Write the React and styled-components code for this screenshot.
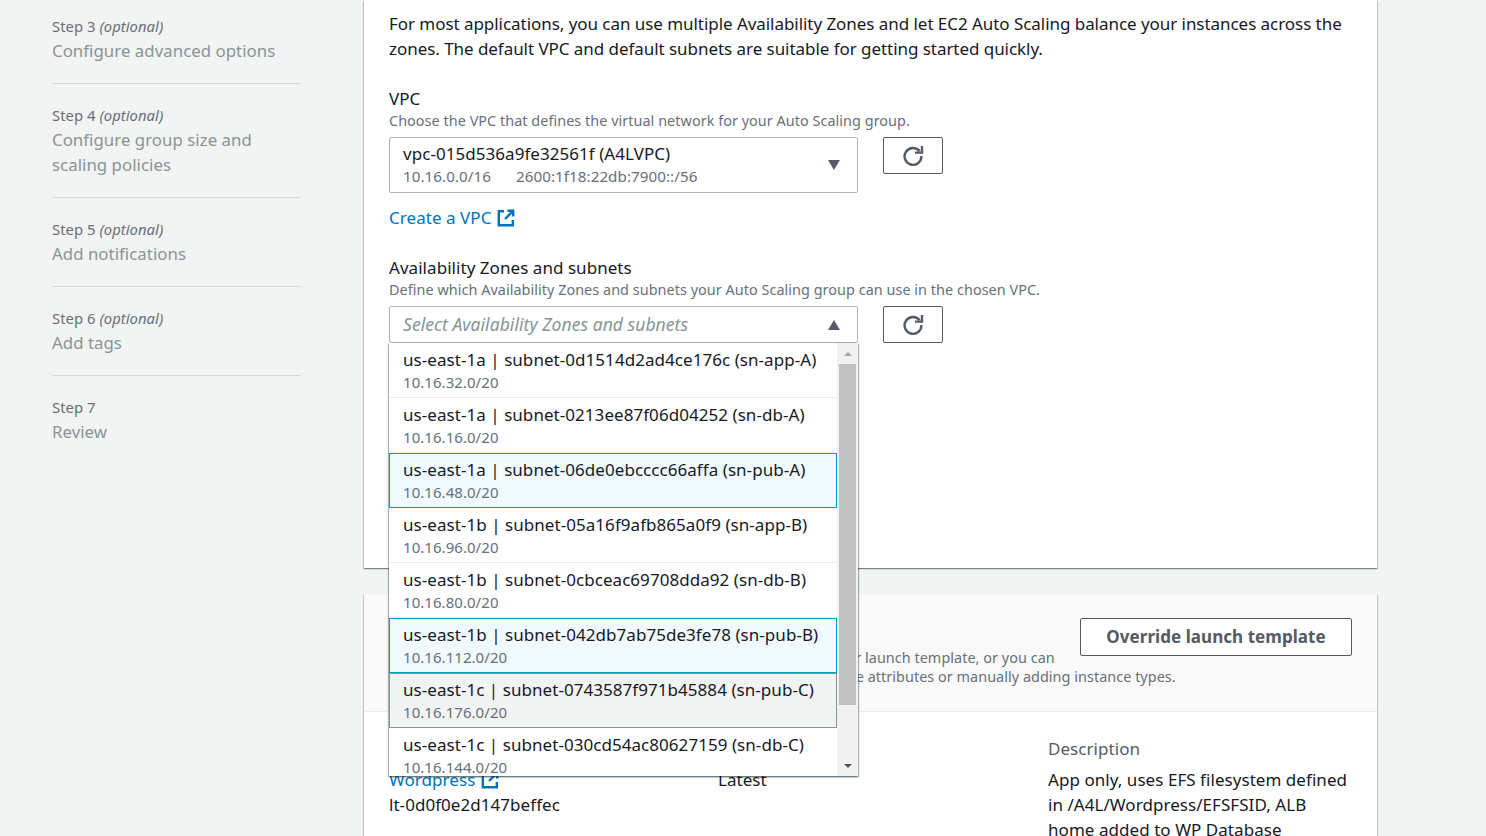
import React from "react";
import styled, { createGlobalStyle } from "styled-components";

const GlobalStyle = createGlobalStyle`
  html, body {
    margin: 0;
    padding: 0;
    background: #f2f3f3;
  }
  body {
    font-family: "Noto Sans", "Open Sans", sans-serif;
    font-size: 17px;
    line-height: 25px;
    color: #16191f;
    letter-spacing: 0.05px;
  }
  * {
    box-sizing: border-box;
  }
`;

const Page = styled.div`
  display: flex;
  height: 836px;
  overflow: hidden;
`;

const Sidebar = styled.nav`
  width: 364px;
  flex: none;
  padding: 15px 63px 0 52px;
`;

const StepItem = styled.div`
  padding: 0 0 20px;
  margin-bottom: 20px;
  border-bottom: ${(p) => (p.$last ? "none" : "1px solid #d5dbdb")};
`;

const StepLabel = styled.div`
  font-size: 14.8px;
  line-height: 22px;
  color: #687078;
  margin-bottom: 1px;

  em {
    font-style: italic;
  }
`;

const StepTitle = styled.div`
  color: #879596;
  font-size: 16.8px;
  line-height: 25px;
  width: 228px;
`;

const Main = styled.main`
  width: 1013px;
  flex: none;
`;

const Card = styled.section`
  background: #fff;
  box-shadow: 0 1px 1px 0 rgba(0, 28, 36, 0.3), 1px 1px 1px 0 rgba(0, 28, 36, 0.15),
    -1px 1px 1px 0 rgba(0, 28, 36, 0.15);
`;

const NetworkCard = styled(Card)`
  height: 568px;
  padding: 11px 25px 0;
  margin-bottom: 26px;
`;

const Intro = styled.p`
  margin: 0 0 26px;
  letter-spacing: -0.05px;
`;

const Field = styled.div`
  margin-top: ${(p) => p.$top || 0}px;
`;

const FieldLabel = styled.div`
  line-height: 24px;
`;

const FieldHint = styled.div`
  font-size: 14.4px;
  line-height: 19px;
  color: #687078;
  margin-bottom: 7px;
`;

const FieldRow = styled.div`
  display: flex;
  align-items: flex-start;
  gap: 25px;
`;

const SelectWrap = styled.div`
  position: relative;
  width: 469px;
`;

const SelectBox = styled.div`
  display: flex;
  align-items: center;
  justify-content: space-between;
  height: ${(p) => p.$height}px;
  padding: 0 17px 0 13px;
  background: #fff;
  border: 1px solid #aab7b8;
  border-radius: 2px;
`;

const SelectValue = styled.div`
  padding-bottom: 4px;
`;

const SelectMeta = styled.div`
  font-size: 15.2px;
  line-height: 20px;
  color: #687078;
  display: flex;
  gap: 25px;
`;

const Placeholder = styled.span`
  font-size: 17.5px;
  font-style: italic;
  color: #879596;
`;

const Caret = styled.span`
  width: 0;
  height: 0;
  border-left: 6.5px solid transparent;
  border-right: 6.5px solid transparent;
  border-${(p) => (p.$up ? "bottom" : "top")}: 10px solid #545b64;
`;

const RefreshButton = styled.button`
  width: 60px;
  height: 37px;
  padding: 0 0 2px;
  display: flex;
  align-items: center;
  justify-content: center;
  background: #fff;
  border: 1px solid #545b64;
  border-radius: 2px;
  color: #545b64;
`;

const LinkText = styled.a`
  display: inline-flex;
  align-items: center;
  gap: 6px;
  color: #0073bb;
  text-decoration: none;
`;

const CreateLink = styled(LinkText)`
  margin-top: 12px;
`;

const Dropdown = styled.div`
  position: absolute;
  z-index: 5;
  top: 100%;
  left: 0;
  width: 100%;
  height: 433px;
  display: flex;
  background: #fff;
  box-shadow: 0 1px 2px 0 rgba(0, 28, 36, 0.5), 1px 1px 1px 0 rgba(0, 28, 36, 0.2),
    -1px 1px 1px 0 rgba(0, 28, 36, 0.2);
`;

const OptionList = styled.div`
  width: 448px;
  height: 100%;
  overflow: hidden;
`;

const Option = styled.div`
  height: 55px;
  padding: 3px 13px 0 13px;
  border-style: solid;
  border-width: 1px;
  border-color: ${(p) =>
    p.$state === "selected" ? "#00a1c9" : p.$state === "focus" ? "#879596" : "transparent"};
  border-bottom-color: ${(p) =>
    p.$state === "selected" ? "#00a1c9" : p.$state === "focus" ? "#879596" : "#eaeded"};
  background: ${(p) =>
    p.$state === "selected" ? "#f1faff" : p.$state === "focus" ? "#f2f3f3" : "#fff"};
`;

const OptionTitle = styled.div`
  line-height: 25px;
  white-space: nowrap;
`;

const OptionMeta = styled.div`
  font-size: 15px;
  line-height: 20px;
  color: #687078;
`;

const Scrollbar = styled.div`
  width: 21px;
  height: 100%;
  background: #f1f1f1;
  display: flex;
  flex-direction: column;
  align-items: center;
`;

const ScrollArrow = styled.div`
  height: 21px;
  flex: none;
  display: flex;
  align-items: center;
  justify-content: center;
  margin-top: ${(p) => p.$top || 0}px;
`;

const ScrollTriangle = styled.span`
  width: 0;
  height: 0;
  border-left: 4px solid transparent;
  border-right: 4px solid transparent;
  border-${(p) => (p.$up ? "bottom" : "top")}: 4px solid ${(p) => (p.$up ? "#a3a3a3" : "#505050")};
`;

const ScrollThumb = styled.div`
  width: 17px;
  height: 341px;
  flex: none;
  background: #c1c1c1;
`;

const TemplateCard = styled(Card)`
  min-height: 400px;
`;

const TemplateHeader = styled.header`
  height: 118px;
  padding: 23px 25px 0;
  background: #fafafa;
  border-bottom: 1px solid #eaeded;
  display: flex;
  justify-content: space-between;
  align-items: flex-start;
  position: relative;
`;

const TemplateIntro = styled.div`
  flex: 1;
  min-width: 0;

  h2 {
    margin: 0 0 6px;
    font-size: 18px;
    line-height: 25px;
    font-weight: 700;
  }

  p {
    margin: 0;
    font-size: 14.4px;
    line-height: 19px;
    color: #687078;
    white-space: nowrap;
  }
`;

const OverrideButton = styled.button`
  position: absolute;
  top: 24px;
  right: 25px;
  width: 272px;
  height: 38px;
  padding: 0 0 2px;
  background: #fff;
  border: 1px solid #545b64;
  border-radius: 2px;
  font-family: inherit;
  font-size: 17px;
  font-weight: 700;
  color: #545b64;
  letter-spacing: inherit;
`;

const TemplateBody = styled.div`
  display: grid;
  grid-template-columns: 329px 330px 304px;
  padding: 24px 25px 0;
`;

const DetailLabel = styled.div`
  color: #545b64;
  line-height: 25px;
  margin-bottom: 6px;
`;

const ExternalIcon = () => (
  <svg width="18" height="18" viewBox="0 0 18 18" fill="none" stroke="currentColor" strokeWidth="2.4">
    <path d="M7 2.2H1.8v14h14V11" />
    <path d="M10.5 1.8h5.7v5.7" />
    <path d="M16 2 8 10" />
  </svg>
);

const RefreshIcon = () => (
  <svg width="22" height="22" viewBox="0 0 22 22" fill="none" stroke="currentColor" strokeWidth="2.4">
    <path d="M17.6 7.2A8.4 8.4 0 1 0 19.4 12" />
    <path d="M20 2v6.6h-7" />
  </svg>
);

const steps = [
  { n: 3, optional: true, title: "Configure advanced options" },
  { n: 4, optional: true, title: "Configure group size and scaling policies" },
  { n: 5, optional: true, title: "Add notifications" },
  { n: 6, optional: true, title: "Add tags" },
  { n: 7, title: "Review" },
];

const subnets = [
  { az: "us-east-1a", id: "subnet-0d1514d2ad4ce176c", name: "sn-app-A", cidr: "10.16.32.0/20" },
  { az: "us-east-1a", id: "subnet-0213ee87f06d04252", name: "sn-db-A", cidr: "10.16.16.0/20" },
  { az: "us-east-1a", id: "subnet-06de0ebcccc66affa", name: "sn-pub-A", cidr: "10.16.48.0/20", state: "selected" },
  { az: "us-east-1b", id: "subnet-05a16f9afb865a0f9", name: "sn-app-B", cidr: "10.16.96.0/20" },
  { az: "us-east-1b", id: "subnet-0cbceac69708dda92", name: "sn-db-B", cidr: "10.16.80.0/20" },
  { az: "us-east-1b", id: "subnet-042db7ab75de3fe78", name: "sn-pub-B", cidr: "10.16.112.0/20", state: "selected" },
  { az: "us-east-1c", id: "subnet-0743587f971b45884", name: "sn-pub-C", cidr: "10.16.176.0/20", state: "focus" },
  { az: "us-east-1c", id: "subnet-030cd54ac80627159", name: "sn-db-C", cidr: "10.16.144.0/20" },
];

export default function App() {
  return (
    <>
      <GlobalStyle />
      <Page>
        <Sidebar>
          {steps.map((s, i) => (
            <StepItem key={s.n} $last={i === steps.length - 1}>
              <StepLabel>
                Step {s.n} {s.optional && <em>(optional)</em>}
              </StepLabel>
              <StepTitle>{s.title}</StepTitle>
            </StepItem>
          ))}
        </Sidebar>
        <Main>
          <NetworkCard>
            <Intro>
              For most applications, you can use multiple Availability Zones and let EC2 Auto Scaling balance your
              instances across the zones. The default VPC and default subnets are suitable for getting started quickly.
            </Intro>
            <Field>
              <FieldLabel>VPC</FieldLabel>
              <FieldHint>Choose the VPC that defines the virtual network for your Auto Scaling group.</FieldHint>
              <FieldRow>
                <SelectWrap>
                  <SelectBox $height={56}>
                    <SelectValue>
                      <div>vpc-015d536a9fe32561f (A4LVPC)</div>
                      <SelectMeta>
                        <span>10.16.0.0/16</span>
                        <span>2600:1f18:22db:7900::/56</span>
                      </SelectMeta>
                    </SelectValue>
                    <Caret />
                  </SelectBox>
                </SelectWrap>
                <RefreshButton aria-label="Refresh">
                  <RefreshIcon />
                </RefreshButton>
              </FieldRow>
              <CreateLink href="#">
                Create a VPC <ExternalIcon />
              </CreateLink>
            </Field>
            <Field $top={26}>
              <FieldLabel>Availability Zones and subnets</FieldLabel>
              <FieldHint>Define which Availability Zones and subnets your Auto Scaling group can use in the chosen VPC.</FieldHint>
              <FieldRow>
                <SelectWrap>
                  <SelectBox $height={37}>
                    <Placeholder>Select Availability Zones and subnets</Placeholder>
                    <Caret $up />
                  </SelectBox>
                  <Dropdown>
                    <OptionList>
                      {subnets.map((s) => (
                        <Option key={s.id} $state={s.state}>
                          <OptionTitle>
                            {s.az} | {s.id} ({s.name})
                          </OptionTitle>
                          <OptionMeta>{s.cidr}</OptionMeta>
                        </Option>
                      ))}
                    </OptionList>
                    <Scrollbar>
                      <ScrollArrow>
                        <ScrollTriangle $up />
                      </ScrollArrow>
                      <ScrollThumb />
                      <ScrollArrow $top={50}>
                        <ScrollTriangle />
                      </ScrollArrow>
                    </Scrollbar>
                  </Dropdown>
                </SelectWrap>
                <RefreshButton aria-label="Refresh">
                  <RefreshIcon />
                </RefreshButton>
              </FieldRow>
            </Field>
          </NetworkCard>
          <TemplateCard>
            <TemplateHeader>
              <TemplateIntro>
                <h2>Instance type requirements</h2>
                <p>
                  You can keep the same instance attributes or instance type from your launch template, or you can
                  <br />
                  override your launch template by specifying a different list of instance attributes or manually adding instance types.
                </p>
              </TemplateIntro>
              <OverrideButton>Override launch template</OverrideButton>
            </TemplateHeader>
            <TemplateBody>
              <div>
                <DetailLabel>Launch template</DetailLabel>
                <LinkText href="#">
                  Wordpress <ExternalIcon />
                </LinkText>
                <div>lt-0d0f0e2d147beffec</div>
              </div>
              <div>
                <DetailLabel>Version</DetailLabel>
                <div>Latest</div>
              </div>
              <div>
                <DetailLabel>Description</DetailLabel>
                <div>App only, uses EFS filesystem defined in /A4L/Wordpress/EFSFSID, ALB home added to WP Database</div>
              </div>
            </TemplateBody>
          </TemplateCard>
        </Main>
      </Page>
    </>
  );
}
